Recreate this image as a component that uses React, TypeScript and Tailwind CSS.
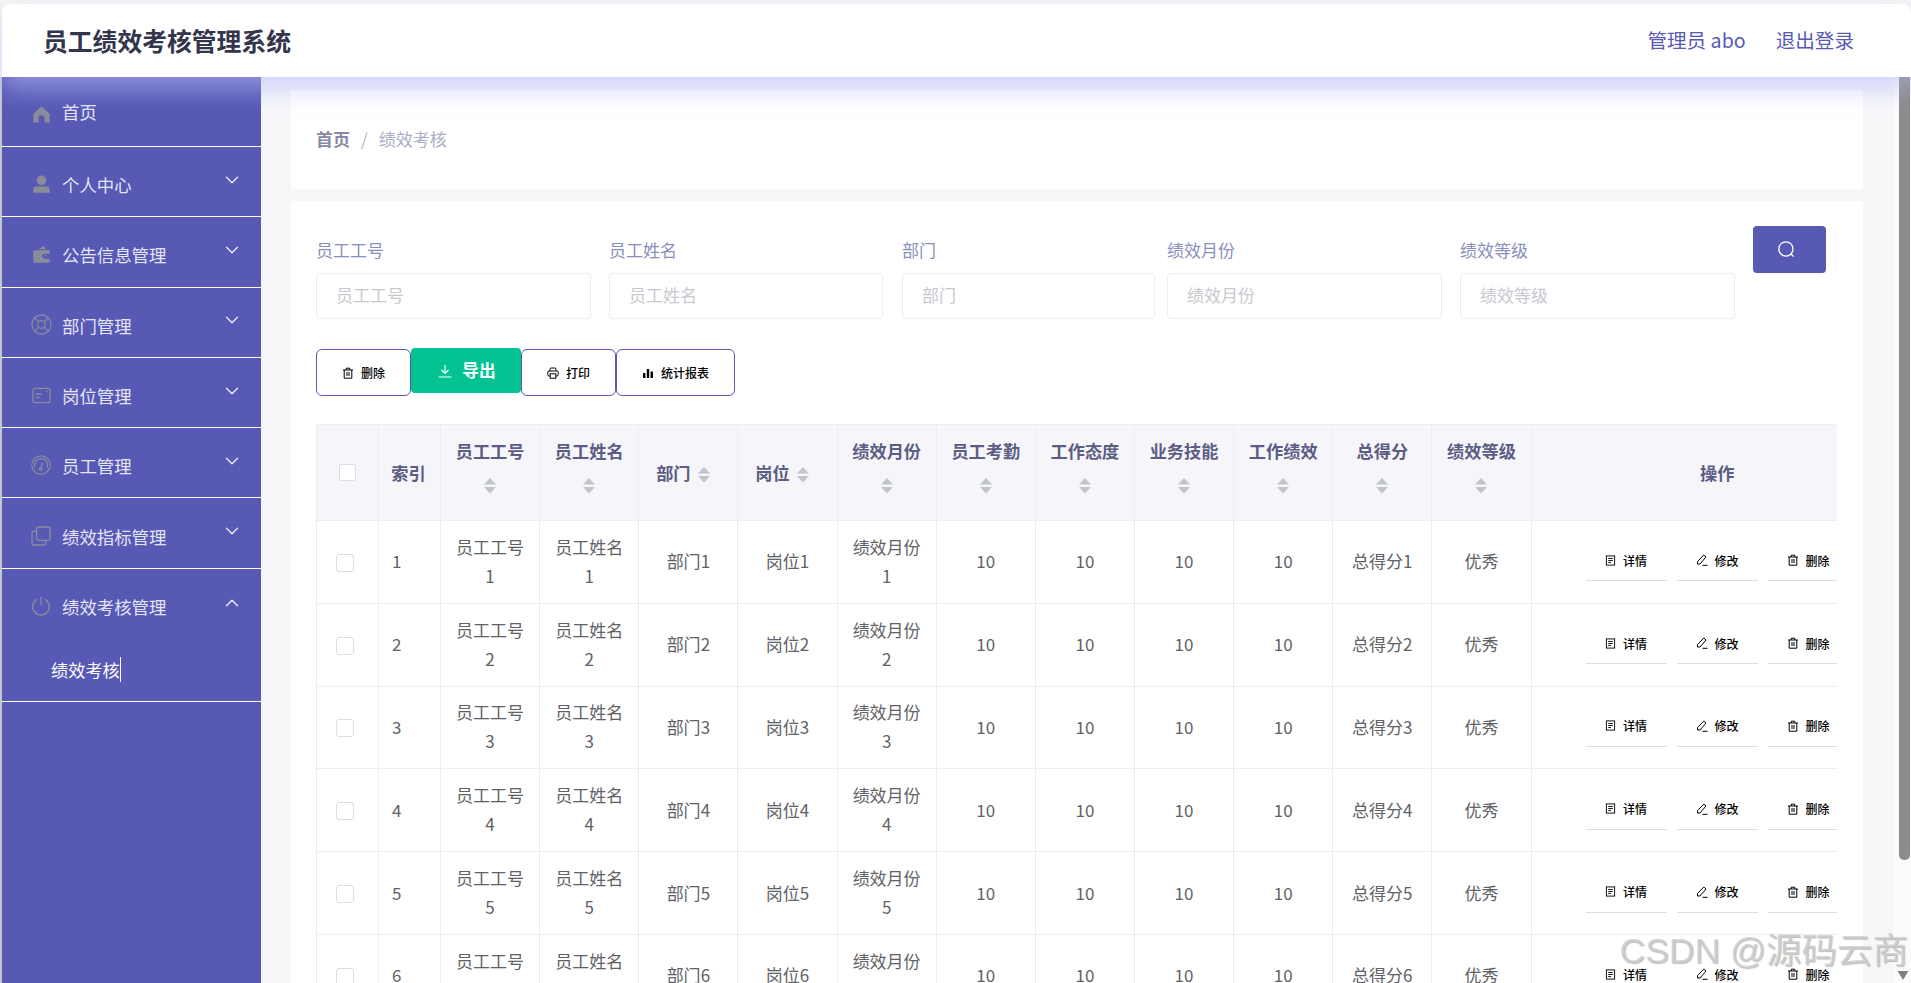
import React from 'react';
import { ChevronDown, ChevronUp, LifeBuoy } from 'lucide-react';

const fontStack = "font-['Noto_Sans_CJK_SC','Noto_Sans',sans-serif]";

const IconHome = () => (
  <svg viewBox="0 0 20 20" className="w-[19px] h-[19px]" fill="currentColor">
    <path d="M10 1.5 18.6 9.2V18.5H13.2V14a3.2 3.2 0 0 0-6.4 0v4.5H1.4V9.2Z" />
  </svg>
);
const IconUser = () => (
  <svg viewBox="0 0 20 20" className="w-[19px] h-[19px]" fill="currentColor">
    <circle cx="10" cy="5.6" r="5" />
    <path d="M1.4 15.5a3.5 3.5 0 0 1 3.5-3.5h10.2a3.5 3.5 0 0 1 3.5 3.5v3.2H1.4Z" />
  </svg>
);
const IconWallet = () => (
  <svg viewBox="0 0 20 20" className="w-[19px] h-[19px]" fill="currentColor">
    <path d="M6.5 4.6 12.3 1l2.6 3.6Z" />
    <path fillRule="evenodd" d="M1.4 5.6h17.2v3.6h-5.3a2.6 2.6 0 0 0 0 5.2h5.3v4.2H1.4Zm12 5h2v1.6h-2Z" />
  </svg>
);
const IconCard = () => (
  <svg viewBox="0 0 20 20" className="w-[19px] h-[19px]" fill="none" stroke="currentColor" strokeWidth="1.3">
    <rect x="1" y="2.5" width="18" height="15" rx="1.8" />
    <path d="M4.2 8.4h6.4M4.2 12h3.6" strokeWidth="1.6" />
    <path d="M14.6 5.8h1.6" strokeWidth="1.6" />
  </svg>
);
const IconOdometer = () => (
  <svg viewBox="0 0 20 20" className="w-[20px] h-[20px]" fill="none" stroke="currentColor" strokeWidth="1.2">
    <circle cx="10" cy="10" r="9.2" />
    <path d="M3.8 12.5A6.6 6.6 0 1 1 16.2 12.5" />
    <circle cx="9.6" cy="14" r="1.3" />
    <path d="M10.2 12.8 11.4 8" />
  </svg>
);
const IconCopy = () => (
  <svg viewBox="0 0 20 20" className="w-[20px] h-[20px]" fill="none" stroke="currentColor" strokeWidth="1.3">
    <rect x="5.6" y="1" width="13.4" height="13.4" rx="1.8" />
    <path d="M5.6 5.4H2.8A1.8 1.8 0 0 0 1 7.2v10A1.8 1.8 0 0 0 2.8 19h10a1.8 1.8 0 0 0 1.8-1.8v-2.8" />
  </svg>
);
const IconPower = () => (
  <svg viewBox="0 0 20 20" className="w-[20px] h-[20px]" fill="none" stroke="currentColor" strokeWidth="1.3">
    <path d="M10 1v8" />
    <path d="M6 3.4a8.3 8.3 0 1 0 8 0" />
  </svg>
);

const IconTrash = () => (
  <svg viewBox="0 0 12 12" className="w-[12px] h-[12px] flex-none" fill="none" stroke="currentColor" strokeWidth="1">
    <path d="M1 3h10M4.2 3V1.2h3.6V3M2.2 3v8.2h7.6V3M5 5v4M7 5v4" />
  </svg>
);
const IconPrint = () => (
  <svg viewBox="0 0 12 12" className="w-[12px] h-[12px] flex-none" fill="none" stroke="currentColor" strokeWidth="1">
    <path d="M3 4V2.2A1.2 1.2 0 0 1 4.2 1h3.6A1.2 1.2 0 0 1 9 2.2V4" />
    <path d="M3 9H2A1.2 1.2 0 0 1 .8 7.800V5.200A1.200 1.200 0 0 1 2 4h8a1.200 1.200 0 0 1 1.200 1.200v2.600A1.200 1.200 0 0 1 10 9H9" />
    <rect x="3.200" y="6.800" width="5.600" height="4.400" />
  </svg>
);
const IconChart = () => (
  <svg viewBox="0 0 12 12" className="w-[12px] h-[12px] flex-none" fill="currentColor">
    <rect x="1" y="6" width="2.400" height="5" />
    <rect x="4.800" y="2" width="2.400" height="9" />
    <rect x="8.600" y="4.500" width="2.400" height="6.500" />
  </svg>
);
const IconDoc = () => (
  <svg viewBox="0 0 12 12" className="w-[11px] h-[11px] flex-none" fill="none" stroke="currentColor" strokeWidth="1">
    <rect x="1.500" y="1" width="9" height="10" />
    <path d="M3.500 3.800h5M3.500 6h5M3.500 8.200h3" />
  </svg>
);
const IconEdit = () => (
  <svg viewBox="0 0 12 12" className="w-[12px] h-[12px] flex-none" fill="none" stroke="currentColor" strokeWidth="1">
    <path d="M7.800 1 10 3 4 10H1.500V7.600Z" />
    <path d="M6.500 11.300h5" />
  </svg>
);

const SortCaret = () => (
  <svg viewBox="0 0 12 16" className="inline-block w-[12px] h-[16px] align-middle" fill="#c0c4cc">
    <path d="M6 0l6 6.500H0Z" />
    <path d="M0 9h12l-6 6.500Z" />
  </svg>
);

const menu = [
  { label: '个人中心', icon: <IconUser /> },
  { label: '公告信息管理', icon: <IconWallet /> },
  { label: '部门管理', icon: <LifeBuoy className="w-[23px] h-[23px] flex-none" strokeWidth={1.2} /> },
  { label: '岗位管理', icon: <IconCard /> },
  { label: '员工管理', icon: <IconOdometer /> },
  { label: '绩效指标管理', icon: <IconCopy /> },
];

const NavRow: React.FC<{ icon: React.ReactNode; label: string; open?: boolean }> = ({ icon, label, open }) => (
  <div className="h-[69.300px] flex items-center pl-[29px] pr-[18px]">
    <span className="w-[20px] flex justify-center text-[#8b8c99] mt-[5px]">{icon}</span>
    <span className="ml-[11px] text-[17.400px] text-[#e4e4f4] mt-[7px]">{label}</span>
    <span className="ml-auto text-[#eeeefa]">
      {open ? <ChevronUp className="w-[22px] h-[22px]" strokeWidth={1.400} /> : <ChevronDown className="w-[22px] h-[22px] mb-[4px]" strokeWidth={1.400} />}
    </span>
  </div>
);

const Sidebar = () => (
  <aside className="w-[261px] flex-none border-l-2 border-[#c6c6d2] bg-[#5759b4]">
    <div className="h-[70px] border-b border-white flex items-center pl-[29px]">
      <span className="w-[20px] flex justify-center text-[#8b8c99] mt-[6px]"><IconHome /></span>
      <span className="ml-[11px] text-[17.400px] text-[#e4e4f4] mt-[1px]">首页</span>
    </div>
    {menu.map((m) => (
      <div key={m.label} className="border-b border-white">
        <NavRow icon={m.icon} label={m.label} />
      </div>
    ))}
    <div className="border-b border-white">
      <NavRow icon={<IconPower />} label="绩效考核管理" open />
      <div className="h-[63px] flex items-center pl-[49px] text-[17.200px] text-white">
        绩效考核<span className="w-px h-[25px] bg-white" />
      </div>
    </div>
  </aside>
);

const Field: React.FC<{ label: string; width: string; margin: string }> = ({ label, width, margin }) => (
  <div className={`pt-[12px] flex-none ${width} ${margin}`}>
    <div className="h-[24px] leading-[24px] text-[17px] text-[#8b8fbd] mb-[11px]">{label}</div>
    <input
      placeholder={label}
      className="w-full h-[46px] pl-[19px] pr-[20px] pb-[3px] rounded-[4px] border border-[#ecebfa] bg-white text-[17px] placeholder:text-[#c8c9d0] outline-none"
    />
  </div>
);

const ToolButton: React.FC<{ icon: React.ReactNode; label: string; width: string }> = ({ icon, label, width }) => (
  <button className={`${width} h-[47px] mt-[1px] flex-none flex items-center justify-center gap-[7px] rounded-[6px] border border-[#5759b4] bg-white text-[12px] font-medium text-black`}>
    {icon}
    {label}
  </button>
);

const OpButton: React.FC<{ icon: React.ReactNode; label: string }> = ({ icon, label }) => (
  <div className="w-[81px] h-[44px] pt-[3px] flex-none flex items-center justify-center gap-[7px] border-b border-[#dcdde9] text-[12px] font-medium text-black">
    {icon}
    {label}
  </div>
);

const headers: { label: string; wrap: boolean }[] = [
  { label: '员工工号', wrap: true },
  { label: '员工姓名', wrap: true },
  { label: '部门', wrap: false },
  { label: '岗位', wrap: false },
  { label: '绩效月份', wrap: true },
  { label: '员工考勤', wrap: true },
  { label: '工作态度', wrap: true },
  { label: '业务技能', wrap: true },
  { label: '工作绩效', wrap: true },
  { label: '总得分', wrap: true },
  { label: '绩效等级', wrap: true },
];

const thClass = 'border border-[#ebecf5] bg-[#f5f5fa] text-[17.200px] font-semibold text-[#5b5d83] leading-[33px] p-0 align-middle';
const tdClass = 'border border-[#ebecf5] text-[17px] leading-[29px] text-[#606266] text-center px-[12px] pb-[2px] align-middle';

const DataTable = () => (
  <div className="mt-[28px] w-[1521px] overflow-hidden">
    <table className="w-[1521px] table-fixed border-collapse">
      <colgroup>
        <col className="w-[62px]" />
        <col className="w-[62px]" />
        {headers.map((h) => (
          <col key={h.label} className="w-[99.150px]" />
        ))}
        <col className="w-[306.350px]" />
      </colgroup>
      <thead>
        <tr className="h-[96px]">
          <th className={thClass}>
            <span className="block w-[17px] h-[17px] mx-auto bg-white border border-[#dcdde6] rounded-[2px]" />
          </th>
          <th className={`${thClass} pr-[2px]`}>索引</th>
          {headers.map((h) => (
            <th key={h.label} className={`${thClass} ${h.wrap ? 'px-[12px] pb-[11px]' : 'pr-[11px]'}`}>
              {h.label}
              {h.wrap ? <br /> : <span className="inline-block w-[7px]" />}
              <SortCaret />
            </th>
          ))}
          <th className={`${thClass} pl-[66px]`}>操作</th>
        </tr>
      </thead>
      <tbody>
        {[1, 2, 3, 4, 5, 6].map((n) => (
          <tr key={n} className="h-[82.800px]">
            <td className={`${tdClass} !px-0`}>
              <span className="block w-[18px] h-[18px] ml-[19px] mt-[4px] bg-white border border-[#dcdde6] rounded-[3px]" />
            </td>
            <td className={`${tdClass} !text-left !px-[13px]`}>{n}</td>
            <td className={tdClass}>员工工号{n}</td>
            <td className={tdClass}>员工姓名{n}</td>
            <td className={tdClass}>部门{n}</td>
            <td className={tdClass}>岗位{n}</td>
            <td className={tdClass}>绩效月份{n}</td>
            <td className={tdClass}>10</td>
            <td className={tdClass}>10</td>
            <td className={tdClass}>10</td>
            <td className={tdClass}>10</td>
            <td className={tdClass}>总得分{n}</td>
            <td className={tdClass}>优秀</td>
            <td className={`${tdClass} !px-0 !pb-0 overflow-hidden`}>
              <div className="flex gap-[10px] pl-[54px] mb-[5px]">
                <OpButton icon={<IconDoc />} label="详情" />
                <OpButton icon={<IconEdit />} label="修改" />
                <OpButton icon={<IconTrash />} label="删除" />
              </div>
            </td>
          </tr>
        ))}
      </tbody>
    </table>
  </div>
);

const App: React.FC = () => (
  <div className={`relative w-[1911px] h-[983px] overflow-hidden bg-[#f5f5f5] pt-[4px] flex flex-col ${fontStack}`}>
    <header className="relative z-10 ml-[2px] h-[73px] flex-none flex items-center pl-[41px] pr-[57px] bg-white rounded-t-[8px] shadow-[0_12px_24px_rgba(182,185,250,0.6)]">
      <h1 className="text-[24.800px] font-semibold text-[#33354d]">员工绩效考核管理系统</h1>
      <div className="ml-auto flex gap-[30px] pb-[1px] text-[19.600px] text-[#5759b4]">
        <span>管理员 abo</span>
        <span>退出登录</span>
      </div>
    </header>

    <div className="flex flex-1 min-h-0">
      <Sidebar />

      <main className="w-[1632px] flex-none bg-[#f6f7f9] px-[30px] pt-[13px]">
        <div className="h-[99px] bg-white pl-[25px] pb-[2px] flex items-center gap-[11px] text-[17px]">
          <span className="font-semibold text-[#8688a6]">首页</span>
          <span className="text-[#b5b7c8]">/</span>
          <span className="text-[#a9adc6]">绩效考核</span>
        </div>

        <section className="mt-[12px] bg-white pl-[25px] pr-[26px] pt-[25px] h-[800px]">
          <div className="flex items-start">
            <Field label="员工工号" width="w-[275px]" margin="" />
            <Field label="员工姓名" width="w-[274px]" margin="ml-[18px]" />
            <Field label="部门" width="w-[253px]" margin="ml-[19px]" />
            <Field label="绩效月份" width="w-[275px]" margin="ml-[12px]" />
            <Field label="绩效等级" width="w-[275px]" margin="ml-[18px]" />
            <button className="ml-[18px] w-[73px] h-[47px] flex-none flex items-center justify-center pr-[6px] rounded-[4px] bg-[#5759b4] text-white">
              <svg viewBox="0 0 16 16" className="w-[19px] h-[19px]" fill="none" stroke="currentColor" strokeWidth="1.100">
                <circle cx="7.500" cy="7.500" r="6" />
                <path d="M11.800 11.800 14 14" />
              </svg>
            </button>
          </div>

          <div className="mt-[29px] h-[48px] flex items-start">
            <ToolButton icon={<IconTrash />} label="删除" width="w-[95px]" />
            <button className="w-[110px] h-[45px] pl-[2px] flex-none flex items-center justify-center gap-[10px] rounded-[4px] bg-[#02c391] text-white text-[16.700px] font-semibold">
              <svg viewBox="0 0 14 14" className="w-[14px] h-[14px]" fill="none" stroke="currentColor" strokeWidth="1.200">
                <path d="M7 1v8M3.500 6 7 9.500 10.500 6M.5 13h13" />
              </svg>
              导出
            </button>
            <ToolButton icon={<IconPrint />} label="打印" width="w-[95px]" />
            <ToolButton icon={<IconChart />} label="统计报表" width="w-[119px]" />
          </div>

          <DataTable />
        </section>
      </main>

      <div className="w-[18px] flex-none bg-[#fbfbfc] flex flex-col items-center justify-between pb-[3px]">
        <div className="ml-[5px] w-[11px] h-[783px] rounded-b-[5px] bg-[#8c8c8c]" />
        <svg viewBox="0 0 12 10" className="w-[12px] h-[9px] ml-[2px]" fill="#7f7f7f">
          <path d="M0 0h12L6 10Z" />
        </svg>
      </div>
    </div>

    {/* CSDN watermark */}
    <div className="absolute z-20 right-[3px] bottom-[10px] text-[35.500px] leading-[44px] whitespace-nowrap font-['Liberation_Sans','Noto_Sans_CJK_SC',sans-serif] text-[rgba(206,206,206,0.8)] [text-shadow:1px_1px_1px_rgba(110,110,110,0.45)]">
      CSDN @源码云商
    </div>
  </div>
);

export default App;
